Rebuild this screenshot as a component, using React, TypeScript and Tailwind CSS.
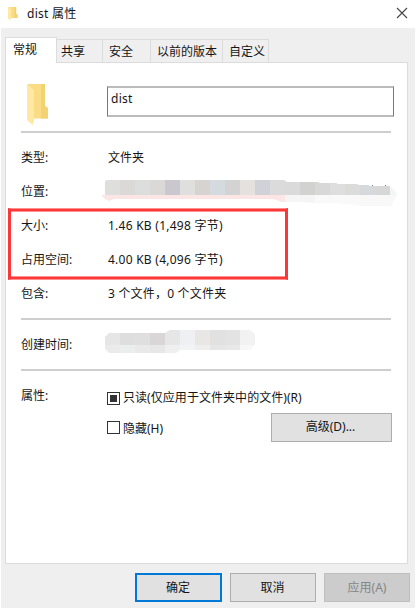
import React from "react";

const tabs = [
  { label: "共享", box: "w-[46px] pl-[4px]" },
  { label: "安全", box: "w-[48px] pl-[6px]" },
  { label: "以前的版本", box: "w-[72px] pl-[6px]" },
  { label: "自定义", box: "w-[46px] pl-[6px]" },
];

const pathCells = ["#dededc", "#dad9d7", "#dcdddd", "#dad9d7", "#cac7ce", "#dfe0de", "#d7d3d0", "#d5dade", "#d3d3d3", "#e5e1de", "#d0d2d7", "#dbdbdb", "#dadada", "#d2d2d0", "#d8d8d8", "#dedede", "#dbdbd9", "#d7d8dc", "#d7d7d7", "#f3f5f4"];

function Row({ label, children }: { label: string; children?: React.ReactNode }) {
  return (
    <div className="flex h-[34px] items-center">
      <span className="w-[87px] shrink-0">{label}</span>
      {children}
    </div>
  );
}

function FolderIcon({ className }: { className: string }) {
  return (
    <svg className={className} viewBox="0 0 22 41" preserveAspectRatio="none">
      <path d="M1 0H18V22L21 24V34.500H7L1 30Z" fill="#f9dc84" />
      <path d="M14 0H18V22L21 24V34.500H14Z" fill="#f3d273" />
      <path d="M0 0L7 6V37L5.500 41L0 36Z" fill="#ffe8a2" />
    </svg>
  );
}

function PathMosaic() {
  return (
    <svg className="-ml-[7px] h-[28px] w-[297px] shrink-0" viewBox="101 178 297 28" shapeRendering="crispEdges">
      <clipPath id="path-top">
        <path d="M105 181L107 180H284L287 182H318L320 183H336L338 184H357L359 185H367L371 186H390L395 191L397 195H105Z" />
      </clipPath>
      <clipPath id="path-bottom">
        <path d="M101 195H397L391 206H362L355 205L347 204L335 203H315L300 202H281L277 200L272 199H114L109 201L105 199Z" />
      </clipPath>
      <g clipPath="url(#path-top)">
        {pathCells.map((fill, i) => (
          <rect key={i} x={105 + i * 15} y="178" width="15" height="17" fill={fill} />
        ))}
      </g>
      <g clipPath="url(#path-bottom)">
        <rect x="101" y="195" width="184" height="11" fill="#fbe5e5" />
        <rect x="285" y="195" width="30" height="11" fill="#f5f5f5" />
        <rect x="315" y="195" width="45" height="11" fill="#f9f9f9" />
        <rect x="360" y="195" width="37" height="11" fill="#f8f8f8" />
      </g>
      <rect x="372" y="185" width="1" height="1" fill="#777d88" />
      <rect x="385" y="185" width="1" height="1" fill="#777d88" />
    </svg>
  );
}

function DateMosaic() {
  return (
    <svg className="-mt-[6px] -ml-[3px] h-[24px] w-[151px] shrink-0" viewBox="105 330 151 24" shapeRendering="crispEdges">
      <clipPath id="date-shape">
        <path d="M105 337L109 333H165L170 330H250L255 334V345L250 350H180L176 353H109L105 349Z" />
      </clipPath>
      <g clipPath="url(#date-shape)">
        {["#e6e6e6", "#dedede", "#dfdfdf", "#d8d6d7", "#e6e6e6", "#eef0f3", "#e8e7e5", "#e1e1e1", "#e3e3e3", "#f2f2f2"].map((fill, i) => (
          <rect key={i} x={105 + i * 15} y="330" width="15" height="15" fill={fill} />
        ))}
        {["#ebebeb", "#ebeeed", "#e9e9e9", "#e7e7e7", "#efefef", "#f2f3f5", "#eeeeee", "#e6e6e6", "#e8e8e8", "#f8f8f8"].map((fill, i) => (
          <rect key={i} x={105 + i * 15} y="345" width="15" height="9" fill={fill} />
        ))}
      </g>
    </svg>
  );
}

const button = "flex h-[29px] items-center justify-center border bg-[#e1e1e1]";

export default function App() {
  return (
    <div className="relative flex h-[608px] w-[420px] flex-col overflow-hidden bg-white font-['Noto_Sans','Noto_Sans_CJK_SC',sans-serif] text-[12px] leading-[18px] whitespace-nowrap text-[#151515]">
      <header className="flex h-[28px] shrink-0 items-center pl-[8px]">
        <FolderIcon className="-mt-[2px] h-[13px] w-[10px]" />
        <h1 className="ml-[9px] text-[12px] tracking-[0.25px]">dist 属性</h1>
        <svg className="-mt-[3px] mr-[12px] ml-auto h-[12px] w-[12px]" viewBox="0 0 12 12" stroke="#444" strokeWidth="1.1">
          <path d="M1 1L11 11M11 1L1 11" />
        </svg>
      </header>

      <div className="ml-px flex w-[414px] grow flex-col bg-[#efefef] pr-[7px] pl-[4px]">
        <nav className="z-10 mt-[9px] -mb-px flex h-[26px] items-end">
          <div className="h-[26px] w-[52px] border border-b-0 border-[#dcdcdc] bg-white pt-[3px] pl-[7px]">常规</div>
          {tabs.map((tab) => (
            <div key={tab.label} className={`h-[24px] border border-l-0 border-[#dcdcdc] pt-[3px] ${tab.box}`}>
              {tab.label}
            </div>
          ))}
        </nav>

        <main className="flex h-[502px] w-[403px] flex-col border border-[#dcdcdc] bg-white pr-[14px] pl-[15px]">
          <div className="flex h-[68px] shrink-0 pt-[21px]">
            <FolderIcon className="ml-[6px] h-[41px] w-[22px] shrink-0" />
            <div className="mt-[2px] ml-[58px] h-[31px] w-[287px] shrink-0 border border-t-2 border-b-2 border-x-[#777] border-y-[#bbb] bg-white pt-[2px] pl-[3px] tracking-[0.3px]">dist</div>
          </div>
          <div className="h-[2px] w-[370px] shrink-0 bg-[#cecece]" />
          <section className="h-[185px] shrink-0 pt-[8px]">
            <Row label="类型:">文件夹</Row>
            <Row label="位置:"><PathMosaic /></Row>
            <Row label="大小:"><span className="tracking-[0.25px]">1.46 KB (1,498 字节)</span></Row>
            <Row label="占用空间:"><span className="tracking-[0.25px]">4.00 KB (4,096 字节)</span></Row>
            <Row label="包含:"><span className="tracking-[0.2px]">3 个文件，0 个文件夹</span></Row>
          </section>
          <div className="h-[2px] w-[370px] shrink-0 bg-[#cecece]" />
          <section className="h-[49px] shrink-0 pt-[8px]">
            <Row label="创建时间:"><DateMosaic /></Row>
          </section>
          <div className="h-[2px] w-[370px] shrink-0 bg-[#cecece]" />
          <section className="flex pt-[15px]">
            <span className="w-[86px] shrink-0 pt-px">属性:</span>
            <div className="w-[285px] pt-[3px]">
              <div className="flex items-center">
                <span className="mr-[3px] flex h-[13px] w-[13px] items-center justify-center border border-[#333]">
                  <span className="h-[7px] w-[7px] bg-[#333]" />
                </span>
                <span className="tracking-[0.05px]">只读(仅应用于文件夹中的文件)(R)</span>
              </div>
              <div className="mt-[6px] flex items-start">
                <span className="mt-[8px] mr-[3px] h-[13px] w-[13px] border border-[#333]" />
                <span className="mt-[7px]">隐藏(H)</span>
                <button className={`${button} ml-auto w-[121px] border-[#adadad] pr-[2px] pb-px`}>高级(D)...</button>
              </div>
            </div>
          </section>
        </main>

        <footer className="mt-[9px] -mr-[2px] flex justify-end gap-[8px]">
          <button className={`${button} w-[87px] border-2 border-[#0078d7] pr-px`}>确定</button>
          <button className={`${button} w-[86px] border-[#adadad] pr-px`}>取消</button>
          <button className="flex h-[29px] w-[86px] items-center justify-center border border-[#bfbfbf] bg-[#cccccc] text-[#858585]">应用(A)</button>
        </footer>
      </div>

      <div className="pointer-events-none absolute top-[208px] left-[8px] h-[72px] w-[280px] border-x-[3px] border-y border-x-[#fb3838] border-y-[#ff9090]">
        <div className="h-full border-y-2 border-[#fb3838]">
          <div className="h-full border-y border-[#ff9090]" />
        </div>
      </div>
    </div>
  );
}
